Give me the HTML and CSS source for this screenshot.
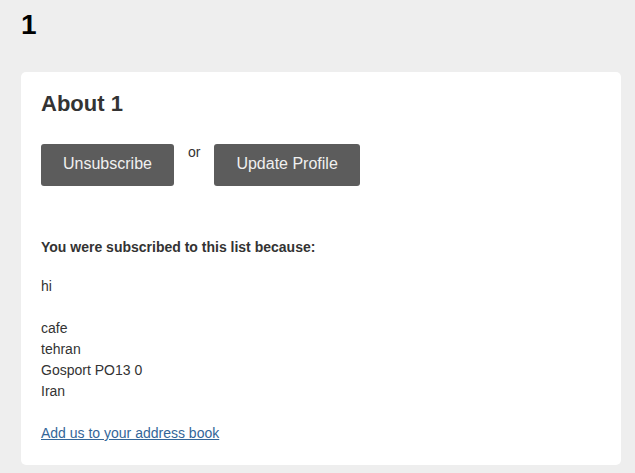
FILE: index.html
```html
<!DOCTYPE html>
<html>
<head>
<meta charset="utf-8">
<link rel="stylesheet" href="styles.css">
</head>
<body>
<div class="page">
  <h1 class="title">1</h1>
  <div class="card">
    <h2 class="card-title">About 1</h2>
    <div class="actions">
      <a class="btn" href="#">Unsubscribe</a>
      <span class="or">or</span>
      <a class="btn" href="#">Update Profile</a>
    </div>
    <p class="reason">You were subscribed to this list because:</p>
    <p class="text">hi</p>
    <p class="text">cafe<br>tehran<br>Gosport PO13 0<br>Iran</p>
    <p class="text"><a class="link" href="#">Add us to your address book</a></p>
  </div>
</div>
</body>
</html>
```

FILE: styles.css
```css
html, body {
  margin: 0;
  padding: 0;
  background: #eeeeee;
  font-family: "Liberation Sans", Arial, sans-serif;
  color: #333333;
}

.page {
  padding: 9px 21px 8px;
}

.title {
  margin: 0 0 31px;
  font-size: 28px;
  line-height: 32px;
  font-weight: bold;
  color: #000000;
}

.card {
  width: 560px;
  background: #ffffff;
  border-radius: 5px;
  padding: 19px 20px 21px;
}

.card-title {
  margin: 0;
  font-size: 22px;
  line-height: 26px;
  font-weight: bold;
  color: #333333;
}

.actions {
  display: flex;
  align-items: flex-start;
  margin-top: 27px;
}

.btn {
  display: block;
  background: #5c5c5c;
  color: #f0f0f0;
  text-decoration: none;
  font-size: 16px;
  line-height: 18px;
  padding: 11px 22px 13px;
  border-radius: 3px;
}

.or {
  font-size: 14px;
  line-height: 16px;
  margin: 0 14px;
  color: #333333;
}

.reason {
  margin: 51px 0 0;
  font-size: 14px;
  line-height: 21px;
  font-weight: bold;
}

.text {
  margin: 18px 0 0;
  font-size: 14px;
  line-height: 21px;
}

.text + .text {
  margin-top: 21px;
}

.link {
  color: #336699;
  text-decoration: underline;
}
```
